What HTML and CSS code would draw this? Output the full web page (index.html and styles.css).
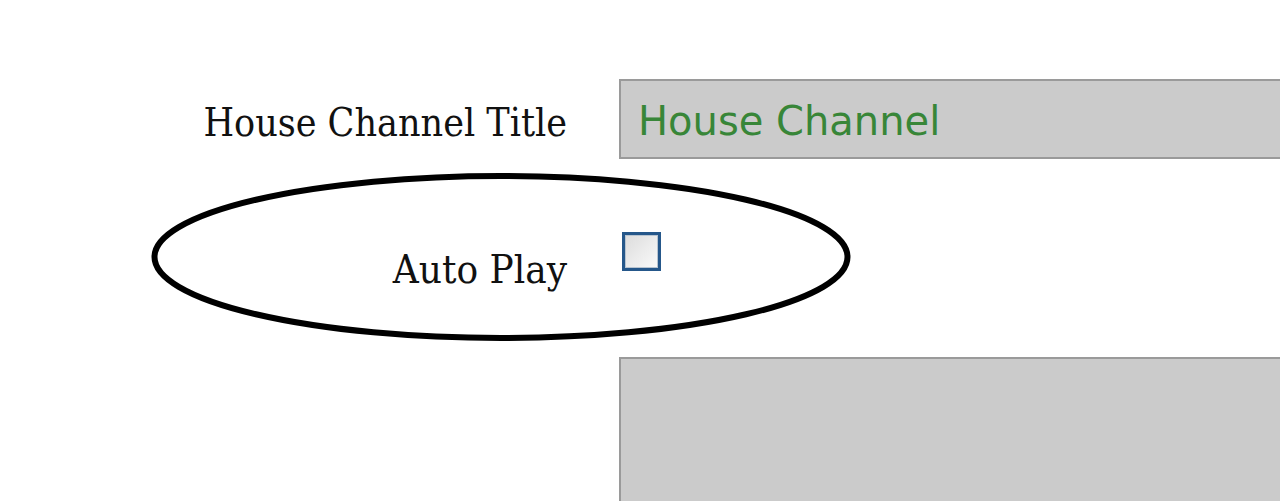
FILE: index.html
```html
<!DOCTYPE html>
<html lang="en">
<head>
    <meta charset="UTF-8">
    <title>House Channel Settings</title>
    <link rel="stylesheet" href="styles.css">
</head>
<body>
    <form class="settings-form">
        <div class="form-row">
            <label for="channel-title">House Channel Title</label>
            <input type="text" id="channel-title" class="text-field" value="House Channel">
        </div>
        <div class="form-row row-check">
            <label for="auto-play">Auto Play</label>
            <span class="fake-check" id="auto-play"></span>
            <!-- highlight circle drawn over the row -->
            <svg class="highlight" width="710" height="180" viewBox="0 0 710 180">
                <ellipse cx="355" cy="90" rx="346.5" ry="81" fill="none" stroke="#000" stroke-width="6"/>
            </svg>
        </div>
        <div class="form-row row-area">
            <label></label>
            <div class="text-area"></div>
        </div>
    </form>
</body>
</html>
```

FILE: styles.css
```css
body {
    margin: 0;
    background-color: white;
    font-family: "DejaVu Serif Condensed", "DejaVu Serif", serif;
    overflow: hidden;
}
.settings-form {
    padding-top: 79px;
}
.form-row {
    display: grid;
    grid-template-columns: 567px 1fr;
    column-gap: 52px;
    align-items: center;
}
.form-row label {
    text-align: right;
    font-size: 39px;
    line-height: 40px;
    padding-top: 8px;
    color: #111;
}
.text-field {
    height: 80px;
    box-sizing: border-box;
    width: 700px;
    margin: 0;
    padding: 4px 0 0 17px;
    border: 2px solid #9a9a9a;
    background-color: #cbcbcb;
    color: #388638;
    font-family: "DejaVu Sans", sans-serif;
    font-size: 40px;
}
.row-check {
    position: relative;
    margin-top: 73px;
    height: 40px;
    align-items: start;
}
.row-check label {
    padding-top: 17px;
    font-size: 40px;
}
.fake-check {
    width: 39px;
    height: 39px;
    box-sizing: border-box;
    margin-left: 3px;
    border: 3px solid #25578a;
    background: linear-gradient(135deg, #dcdcdc, #fafafa);
    box-shadow: inset 0 0 0 1px #b8c4d0;
}
.highlight {
    position: absolute;
    left: 146px;
    top: -65px;
}
.row-area {
    margin-top: 85px;
}
.text-area {
    height: 180px;
    width: 700px;
    border: 2px solid #9a9a9a;
    background-color: #cbcbcb;
}
```
